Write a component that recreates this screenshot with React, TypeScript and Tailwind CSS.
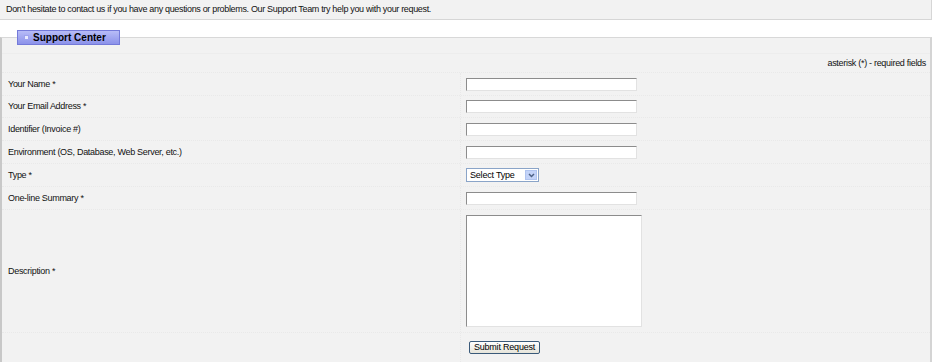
import React from 'react';

const rows: { label: string; kind: 'input' | 'select' | 'textarea'; h: string }[] = [
  { label: 'Your Name *', kind: 'input', h: 'h-[23px]' },
  { label: 'Your Email Address *', kind: 'input', h: 'h-[22px]' },
  { label: 'Identifier (Invoice #)', kind: 'input', h: 'h-[23px]' },
  { label: 'Environment (OS, Database, Web Server, etc.)', kind: 'input', h: 'h-[23px]' },
  { label: 'Type *', kind: 'select', h: 'h-[23px]' },
  { label: 'One-line Summary *', kind: 'input', h: 'h-[23px]' },
  { label: 'Description *', kind: 'textarea', h: 'h-[123px]' },
];

const TextBox = () => (
  <div className="w-[171px] h-[13px] bg-white border border-t-[#8c8c8c] border-l-[#8c8c8c] border-b-[#e2e2e2] border-r-[#e2e2e2]" />
);

const SelectBox = () => (
  <div className="w-[73px] h-[14px] bg-white border border-[#8aa4c8] flex items-center justify-between pl-[3px] pr-[1px]">
    <span className="text-[9px] leading-none text-black tracking-[-0.2px]">Select Type</span>
    <span className="w-[12px] h-[10px] bg-[#c3d3f8] border border-[#b0c4ef] flex items-center justify-center">
      <svg width="7" height="5" viewBox="0 0 7 5">
        <path d="M1 1 L3.5 3.5 L6 1" stroke="#4d6185" strokeWidth="1.5" fill="none" />
      </svg>
    </span>
  </div>
);

const TextArea = () => (
  <div className="w-[176px] h-[112px] bg-white border border-t-[#8c8c8c] border-l-[#8c8c8c] border-b-[#e2e2e2] border-r-[#e2e2e2]" />
);

export default function App() {
  return (
    <div className="w-[932px] h-[362px] overflow-hidden bg-white text-black font-['Liberation_Sans',Arial,sans-serif]">
      {/* Notice */}
      <div className="h-[20px] bg-[#f2f2f2] border-b border-r border-[#d6d6d6] pl-[6px] flex items-center">
        <span className="text-[9px] leading-none text-[#111] tracking-[-0.33px]">
          Don't hesitate to contact us if you have any questions or problems. Our Support Team try help you with your request.
        </span>
      </div>

      {/* Panel */}
      <div className="relative mt-[17px] bg-[#f2f2f2] border-t border-t-[#d8d8d8] border-l-2 border-l-[#c8c8c8] border-r-2 border-r-[#d4d4d4]">
        <div className="absolute left-[15px] top-[-8px] w-[103px] h-[15px] bg-gradient-to-b from-[#b8bcf7] to-[#8c92ea] border border-[#747ad9] flex items-center pl-[6px] gap-[4px]">
          <span className="w-[5px] h-[5px] bg-[#e8eaff] border border-[#9ea3ee]" />
          <span className="text-[10px] font-bold leading-none text-black">Support Center</span>
        </div>

        <div className="h-[15px]" />
        <div className="h-[19px] border-t border-[#ededed] flex items-center justify-end pr-[4px]">
          <span className="text-[9px] leading-none text-[#111] tracking-[-0.3px]">asterisk (*) - required fields</span>
        </div>

        {rows.map((r) => (
          <div key={r.label} className={`grid grid-cols-[459px_1fr] border-t border-dotted border-[#e9e9e9] ${r.h}`}>
            <div className="flex items-center pl-[6px] border-r border-dotted border-[#e9e9e9]">
              <span className="text-[9px] leading-none text-[#111] tracking-[-0.3px]">{r.label}</span>
            </div>
            <div className={`flex pl-[5px] ${r.kind === 'textarea' ? 'items-start pt-[5px]' : 'items-center'}`}>
              {r.kind === 'input' && <TextBox />}
              {r.kind === 'select' && <SelectBox />}
              {r.kind === 'textarea' && <TextArea />}
            </div>
          </div>
        ))}

        <div className="grid grid-cols-[459px_1fr] border-t border-dotted border-[#e9e9e9] h-[30px]">
          <div className="border-r border-dotted border-[#e9e9e9]" />
          <div className="flex items-start pt-[8px] pl-[8px]">
            <button className="w-[71px] h-[13px] rounded-[2px] border border-[#3a5a7a] bg-gradient-to-b from-white to-[#e6e4da] flex items-center justify-center">
              <span className="text-[9px] leading-none text-black tracking-[-0.2px]">Submit Request</span>
            </button>
          </div>
        </div>
      </div>
    </div>
  );
}
